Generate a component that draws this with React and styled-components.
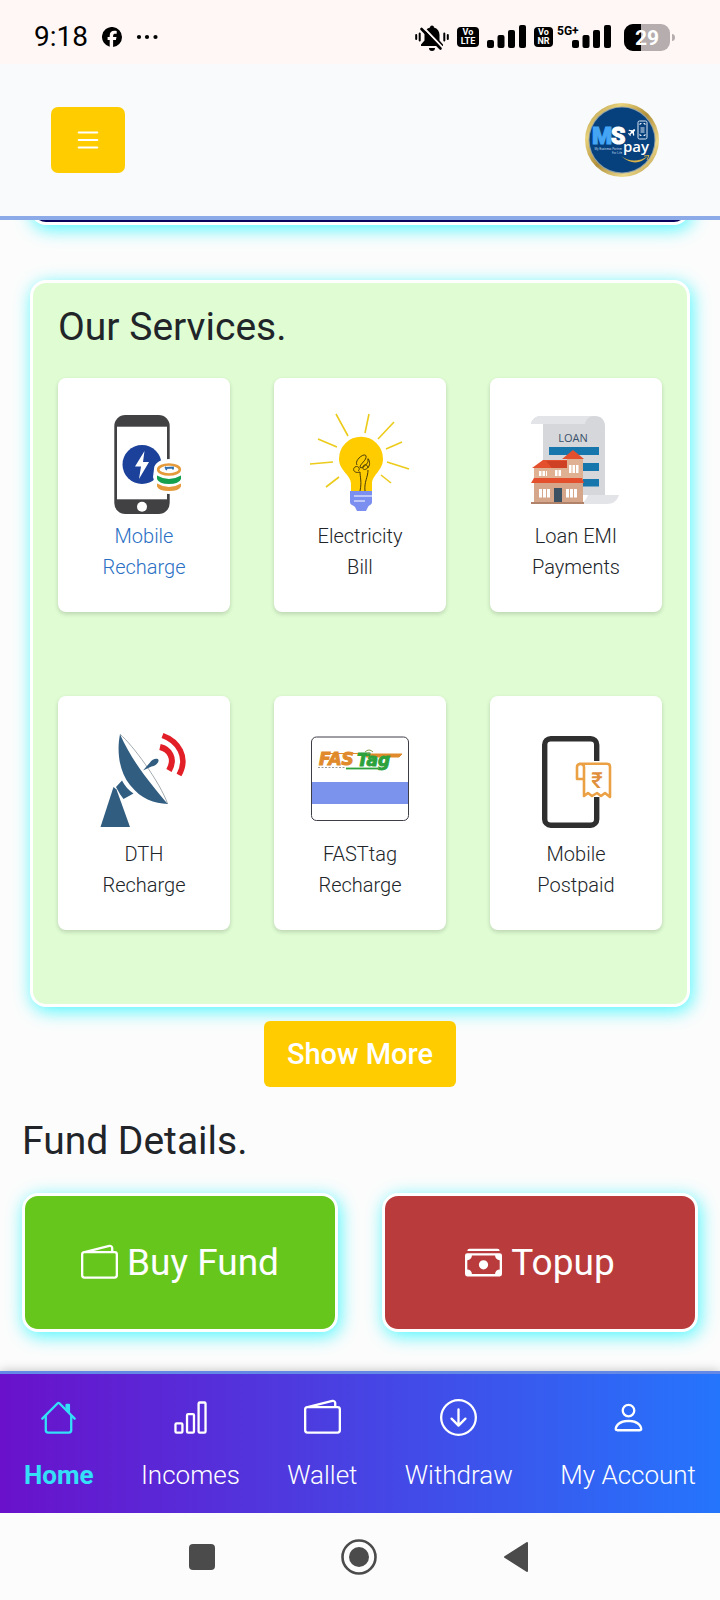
import React from "react";
import styled, { createGlobalStyle, css } from "styled-components";
import { BsList, BsBarChart, BsWallet2, BsArrowDownCircle, BsPerson, BsCashStack } from "react-icons/bs";

const GlobalStyle = createGlobalStyle`
  *, *::before, *::after { box-sizing: border-box; }
  body { margin: 0; background: #fcfcfc; color: #212529; font-family: Roboto, "Liberation Sans", sans-serif; }
  h2 { margin: 0; }
  a { color: inherit; text-decoration: none; }
  button { font-family: inherit; border: 0; cursor: pointer; padding: 0; }
  svg { display: block; flex: none; }
`;

const Page = styled.div`
  min-height: 100vh;
  display: flex;
  flex-direction: column;
`;

const glow = css`
  border: 3px solid #fff;
  border-radius: 16px;
  box-shadow: 2px 4px 18px rgba(0, 245, 255, 0.7);
`;

/* Phone status bar */

const StatusBar = styled.div`
  display: flex;
  align-items: center;
  justify-content: space-between;
  height: 64px;
  padding: 10px 45px 0 34px;
  background: #fff7f6;
  color: #000;
`;

const StatusGroup = styled.div`
  display: flex;
  align-items: center;
  gap: ${(p) => p.$gap}px;
`;

const Clock = styled.time`
  font-size: 28px;
  line-height: 32px;
`;

const NetworkBadge = styled.span`
  width: ${(p) => p.$width}px;
  height: 20px;
  padding-top: 1px;
  border-radius: 4px;
  background: #000;
  color: #fff;
  font-size: 9px;
  font-weight: 700;
  line-height: 9px;
  text-align: center;
`;

/* App header */

const Header = styled.header`
  display: flex;
  align-items: center;
  justify-content: space-between;
  padding: 39px 61px 39px 51px;
  background: #f8fafc;
  border-bottom: 4px solid #8caae8;
`;

const MenuButton = styled.button`
  display: grid;
  place-items: center;
  width: 74px;
  height: 66px;
  border-radius: 7px;
  background: #fc0;
  color: #fff;
`;

/* Content */

const Main = styled.main`
  flex: 1;
  display: flex;
  flex-direction: column;
  overflow: hidden;
  padding-bottom: 39px;
`;

const Banner = styled.div`
  ${glow}
  height: 60px;
  margin: -55px 30px 55px;
  background: #04045c;
`;

const Heading = styled.h2`
  font-size: 39px;
  font-weight: 400;
  line-height: 48px;
`;

const ServicesCard = styled.section`
  ${glow}
  display: flex;
  flex-direction: column;
  gap: 27px;
  margin: 0 30px;
  padding: 20px 25px 74px;
  background: #dffcd3;
`;

const ServiceGrid = styled.div`
  display: grid;
  grid-template-columns: repeat(3, 1fr);
  column-gap: 44px;
  row-gap: 84px;
`;

const ServiceTile = styled.a`
  display: flex;
  flex-direction: column;
  align-items: center;
  gap: 7px;
  padding: 36px 36px 29px;
  border-radius: 8px;
  background: #fff;
  box-shadow: 0 2px 4px rgba(0, 0, 0, 0.16);
  color: ${(p) => (p.$active ? "#2a6fc4" : "#212529")};
  font-size: 20px;
  font-weight: 300;
  line-height: 31px;
  text-align: center;
`;

const ShowMore = styled.button`
  align-self: center;
  margin: 14px 0 30px;
  padding: 0 23px;
  border-radius: 6px;
  background: #fc0;
  color: #fff;
  font-size: 29px;
  font-weight: 500;
  line-height: 66px;
`;

const FundSection = styled.section`
  display: flex;
  flex-direction: column;
  gap: 28px;
  padding: 0 22px;
`;

const FundGrid = styled.div`
  display: grid;
  grid-template-columns: 1fr 1fr;
  gap: 44px;
`;

const FundButton = styled.button`
  ${glow}
  display: flex;
  align-items: center;
  justify-content: center;
  gap: 9px;
  height: 139px;
  background: ${(p) => p.$color};
  color: #fff;
  font-size: 37px;
  line-height: 48px;
`;

/* Bottom tab bar */

const TabBar = styled.nav`
  display: flex;
  justify-content: space-between;
  padding: 25px 24px 23px;
  border-top: 3px solid #6488e6;
  background: linear-gradient(90deg, #6a11cb, #2575fc) padding-box;
  box-shadow: 0 0 10px rgba(0, 0, 0, 0.25);
`;

const Tab = styled.a`
  display: flex;
  flex-direction: column;
  align-items: center;
  gap: 24px;
  color: ${(p) => (p.$active ? "#33e0f8" : "#fff")};
  font-size: 26px;
  font-weight: ${(p) => (p.$active ? 700 : 300)};
  line-height: 30px;
`;

const SystemBar = styled.div`
  display: flex;
  align-items: center;
  justify-content: center;
  gap: 117px;
  height: 87px;
  padding-right: 2px;
  background: #fcfcfc;
`;

const SystemButton = styled.button`
  display: grid;
  place-items: center;
  width: 40px;
  height: 40px;
  background: none;
`;

/* Drawings */

const FacebookIcon = () => (
  <svg width="20" height="20" viewBox="0 0 20 20">
    <path
      fill="#000"
      d="M20 10A10 10 0 1 0 7.7 19.7v-6.6H5.6V10h2.1V8.7c0-3.4 1.5-5 4.9-5 .6 0 1.7.1 2.1.2v2.8h-1.3c-1.6 0-2.3.6-2.3 2.2V10h3.4l-.6 3.1h-2.8V20A10 10 0 0 0 20 10z"
    />
  </svg>
);

const DotsIcon = () => (
  <svg width="22" height="6" viewBox="0 0 22 6">
    <circle cx="3" cy="3" r="2.1" />
    <circle cx="11" cy="3" r="2.1" />
    <circle cx="19.500" cy="3" r="2.1" />
  </svg>
);

const SilentIcon = () => (
  <svg width="34" height="27" viewBox="0 0 34 27">
    <path d="M17 1.500a2 2 0 0 1 2 2c3.600 1 5.500 4 5.500 7.500v5.500l3.500 4v1.500H6v-1.500l3.500-4V11c0-3.500 1.900-6.500 5.500-7.500a2 2 0 0 1 2-2z" />
    <path d="M14 24h6a3 3 0 0 1-6 0z" />
    <g stroke="#000" strokeWidth="2" strokeLinecap="round">
      <path d="M1.200 11v4M4.700 9.500v7M29.300 9.500v7M32.800 11v4" />
    </g>
    <path d="M9 4l18 19" stroke="#fff7f6" strokeWidth="2" />
    <path d="M6.500 5l19 19.500" stroke="#000" strokeWidth="2.600" strokeLinecap="round" />
  </svg>
);

const SignalBars = ({ x = 0 }) => (
  <g>
    <rect x={x} y="15" width="7" height="8" rx="2" />
    <rect x={x + 10.5} y="10" width="7" height="13" rx="2" />
    <rect x={x + 21} y="5" width="7" height="18" rx="2" />
    <rect x={x + 32} y="0" width="7" height="23" rx="2" />
  </g>
);

const SignalIcon = () => (
  <svg width="39" height="24" viewBox="0 0 39 24">
    <SignalBars />
  </svg>
);

const Signal5GIcon = () => (
  <svg width="55" height="28" viewBox="0 -2 55 28">
    <SignalBars x={16} />
    <text x="1" y="10" fontSize="12" fontWeight="700">5G+</text>
  </svg>
);

const BatteryIcon = () => (
  <svg width="51" height="27" viewBox="0 0 51 27">
    <rect width="46" height="27" rx="9" fill="#b6aeae" />
    <path d="M9 0h8v27H9a9 9 0 0 1-9-9V9a9 9 0 0 1 9-9z" />
    <path d="M48 10c2 0 3 1.500 3 3.500s-1 3.500-3 3.500z" fill="#b6aeae" />
    <text x="23" y="21" fontSize="21" fontWeight="700" fill="#fff" textAnchor="middle">29</text>
  </svg>
);

const Logo = () => (
  <svg width="74" height="74" viewBox="0 0 74 74" role="img" aria-label="MS pay">
    <defs>
      <linearGradient id="gold" x1="0" y1="0" x2="1" y2="1">
        <stop offset="0" stopColor="#a58a3a" />
        <stop offset="0.25" stopColor="#e9d27c" />
        <stop offset="0.5" stopColor="#b08f3a" />
        <stop offset="0.75" stopColor="#ecd98c" />
        <stop offset="1" stopColor="#a8842c" />
      </linearGradient>
    </defs>
    <circle cx="37" cy="37" r="37" fill="url(#gold)" />
    <circle cx="37" cy="37" r="33.500" fill="#8fa0a8" />
    <circle cx="37" cy="37" r="32.500" fill="#06417d" />
    <text x="7" y="41" fontSize="23" fontWeight="900" fill="#45a5f5" stroke="#45a5f5">M</text>
    <text x="26" y="41" fontSize="23" fontWeight="900" fill="#fff" stroke="#fff">S</text>
    <text x="38" y="49" fontSize="15" fontFamily="Open Sans" fontWeight="600" fill="#fff">pay</text>
    <text x="37" y="47" fontSize="3" fill="#b9cfe4" textAnchor="end">My Business Partner</text>
    <text x="37" y="51" fontSize="3" fill="#b9cfe4" textAnchor="end">For Life</text>
    <path d="M36 53q13 9 27 0q-12 13-27 0z" fill="#d5b04a" />
    <path d="M59 53l5-.500-2 4.500" fill="none" stroke="#d5b04a" />
    <g fill="none" stroke="#dfeaf5">
      <rect x="53" y="18" width="9" height="18" rx="1.500" />
      <path d="M55 22v-1.500h1.500M58.500 20.500H60V22M55 31v1.500h1.500M58.500 32.500H60V31" />
      <path d="M55.500 25h4M55.500 27h4M55.500 29h4" />
    </g>
    <path
      d="M50 26.500c-1-.6-1.800 0-2.500.8l-3.500-.6-.6.7 2.800 1.400-1.400 1.600-1.500-.2-.5.5 1.500 1 .8 1.500.6-.5v-1.500l1.600-1.300 1.200 3 .8-.6-.4-3.500c.8-.7 1.500-1.500 1.100-2.300z"
      fill="#fff"
    />
  </svg>
);

const HomeIcon = () => (
  <svg width="37" height="37" viewBox="0 0 16 16" fill="currentColor">
    <path d="M2 13.5V7h1v6.5a.5.5 0 0 0 .5.5h9a.5.5 0 0 0 .5-.5V7h1v6.500a1.500 1.500 0 0 1-1.500 1.500h-9A1.500 1.500 0 0 1 2 13.500zm11-11V6l-2-2V2.500a.5.5 0 0 1 .5-.5h1a.5.5 0 0 1 .5.5z" />
    <path d="M7.293 1.500a1 1 0 0 1 1.414 0l6.647 6.646a.5.5 0 0 1-.708.708L8 2.207 1.354 8.854a.5.5 0 1 1-.708-.708L7.293 1.500z" />
  </svg>
);

const ServiceArt = ({ children }) => (
  <svg width="100" height="100" viewBox="0 0 100 100" overflow="visible" aria-hidden="true">
    {children}
  </svg>
);

const MobileArt = () => (
  <ServiceArt>
    <rect x="20.300" y="1" width="55.400" height="99" rx="11" fill="#414042" />
    <rect x="23" y="12.700" width="50" height="72.600" fill="#fff" />
    <circle cx="48" cy="92.700" r="5" fill="#fff" />
    <circle cx="48" cy="50.500" r="19.500" fill="#1b419b" />
    <path d="M50.500 37l-9.500 15.500h6L45 65l10-17h-6z" fill="#fff" />
    <path d="M60 55c0-6 7-10 15-10s15 4 15 10v15c0 6-7 10-15 10s-14-4-14-10l-2-7z" fill="#fff" />
    <ellipse cx="75" cy="55.500" rx="10.800" ry="5" fill="#fff" stroke="#e59a3c" strokeWidth="2.600" />
    <path d="M63 61.500q12 7 24 0v3.500q-2 5-12 5t-12-5z" fill="#15a04d" />
    <path d="M63 69.500q12 7 24 0v3q-2 4.500-12 4.500t-12-4.500z" fill="#e59a3c" />
    <path d="M71 53q2 1.500 1 3M71.500 54l7.500-.500v2" fill="none" stroke="#2f6cab" strokeWidth="1.800" />
  </ServiceArt>
);

const BulbArt = () => (
  <ServiceArt>
    <path
      d="M26 0l12 22M8 25l19 8M0 50l23-2M16 73l13-10M59 0l-4 19M84 8L68 25M92 28l-16 7M99 55l-22-7M81 69L71 61"
      fill="none"
      stroke="#eccb1b"
      strokeWidth="1.600"
    />
    <path d="M51 22.700a22 22 0 0 1 22 22c0 12-11 16-11 25v8H41v-8c0-9-12-13-12-25a22 22 0 0 1 22-22z" fill="#fc0" />
    <g fill="none" stroke="#4b3a06" strokeWidth="1">
      <path d="M50 77c2-9 0-14 0-19M55 77c-1-9 3-14 3-21" />
      <path d="M50 58c-6 2-8-3-5-5s6 2 3 4M47 51c-3-5 8-13 9-9s-6 8-6 11 9-3 8-7 3 2 1 6-7 5-6 1 5-2 5 1" />
    </g>
    <path d="M40 77h22v11c0 3-3 3-4 5l-2 4H47l-2-4c-2-2-5-2-5-5z" fill="#7b8ff0" />
    <path d="M44 82h18M44 87h11" stroke="#fff" strokeWidth="1.200" />
  </ServiceArt>
);

const LoanArt = () => (
  <ServiceArt>
    <path d="M5 10c1-5 5-8 10-8h54c6 0 10 4 10 10v69H17V10z" fill="#d5d7db" />
    <path d="M5 10c1-5 5-8 10-8h54c-6 0-9 3-10 8z" fill="#e3e4e8" />
    <path d="M50 90c6 0 10-3 12-9h31c-2 6-6 9-12 9z" fill="#e3e4e8" />
    <text x="47" y="28" fontSize="11" fontFamily="Open Sans" fontWeight="500" fill="#39516a" textAnchor="middle">LOAN</text>
    <path d="M23 33h50v8H23zM50 49h23v8H50zM50 65h23v7.500H50z" fill="#1776ac" />
    <path d="M8 53h33V44h16v25H8z" fill="#dfb092" />
    <path d="M8 69h49v21H8z" fill="#d6a68a" />
    <path d="M36 45l11-9 11 9zM6 54l11-8h24v8zM8 64h48l2 5H5z" fill="#e4502e" />
    <path d="M20 47h21v7H26z" fill="#cf4124" />
    <path d="M5 88h53v2H5z" fill="#b08269" />
    <path
      d="M13 57h2.500v5H13zM16.500 57H19v5h-2.500zM20 57h1v5h-1zM29 56h2.500v6H29zM32.500 56H35v6h-2.500zM43 51h2.500v8H43zM46.500 51H49v8h-2.500zM50 51h2.500v8H50zM13 75h3v8.500h-3zM17 75h3v8.500h-3zM21 75h3v8.500h-3zM40 75h3v8.500h-3zM44 75h3v8.500h-3zM48 75h3v8.500h-3z"
      fill="#fff"
    />
    <path d="M28 74h8v14h-8z" fill="#3c5161" />
  </ServiceArt>
);

const DishArt = () => (
  <ServiceArt>
    <path d="M26 2.300C38 12 66 50 73.700 72" fill="none" stroke="#8d959b" strokeWidth="0.800" />
    <path d="M26 2.300C23 17 24 38 36 53s24 18 37.700 19C62 58 39 32 26 2.300z" fill="#315d80" />
    <path d="M49 38.500l7-8c2-4 8-5 8.500-2.500s-3 6-7 6.500z" fill="#315d80" />
    <path d="M28 48.500q4 8 11.500 13l-10 5.500q-4-5-7.500-12z" fill="#315d80" />
    <path d="M19.500 55l3 2.500 13.500 37.500H6.500z" fill="#315d80" />
    <g fill="none" stroke="#e21e26">
      <path d="M66 15C75 17 82 26 75 38.500" strokeWidth="6" />
      <path d="M68.500 3.500C84 9 95 25 85 43" strokeWidth="5.500" />
    </g>
  </ServiceArt>
);

const FastagArt = () => (
  <ServiceArt>
    <rect x="1.500" y="5" width="97" height="83.500" rx="5" fill="#fff" stroke="#3d3d48" />
    <path d="M2 50h96v22H2z" fill="#7b93ec" />
    <path d="M14 21.500h36M56 22h36l-3 3H56z" fill="#e08a2c" stroke="#e08a2c" strokeWidth="1" />
    <g fontFamily="DejaVu Sans" fontSize="17" fontWeight="700" fontStyle="italic">
      <text x="9" y="33" fill="#e08a2c" stroke="#e08a2c">FAS</text>
      <text x="47" y="34" fill="#2da23c" stroke="#2da23c">Tag</text>
    </g>
    <path d="M36 36.500h32" stroke="#2da23c" strokeWidth="1.800" />
    <path d="M8 35.500h27" stroke="#9a9a9a" strokeWidth="1" strokeDasharray="2 1.500" />
    <path d="M55 20q4-4 8 0M57 22q2-2 4 0" fill="none" stroke="#8a9c4a" />
  </ServiceArt>
);

const PostpaidArt = () => (
  <ServiceArt>
    <rect x="18.700" y="6.700" width="52" height="86.500" rx="6" fill="none" stroke="#2f2f2f" strokeWidth="5.400" />
    <path d="M50 29h35v36H55V48h-6z" fill="#fff" />
    <path
      d="M53 31.700h28c2 0 3 1 3 3V65l-5-4-4 3-4-3-5 3-4-3-4 3V35c0-4-7-4-7 0v12h7"
      fill="none"
      stroke="#eba044"
      strokeWidth="2.600"
      strokeLinejoin="round"
    />
    <text x="71" y="56" fontSize="22" fontWeight="500" fill="#e08f3c" textAnchor="middle">₹</text>
  </ServiceArt>
);

const services = [
  { lines: ["Mobile", "Recharge"], Art: MobileArt, active: true },
  { lines: ["Electricity", "Bill"], Art: BulbArt },
  { lines: ["Loan EMI", "Payments"], Art: LoanArt },
  { lines: ["DTH", "Recharge"], Art: DishArt },
  { lines: ["FASTtag", "Recharge"], Art: FastagArt },
  { lines: ["Mobile", "Postpaid"], Art: PostpaidArt },
];

const tabs = [
  { label: "Home", Icon: HomeIcon, active: true },
  { label: "Incomes", Icon: BsBarChart },
  { label: "Wallet", Icon: BsWallet2 },
  { label: "Withdraw", Icon: BsArrowDownCircle },
  { label: "My Account", Icon: BsPerson },
];

export default function App() {
  return (
    <Page>
      <GlobalStyle />
      <StatusBar>
        <StatusGroup $gap={14}>
          <Clock>9:18</Clock>
          <FacebookIcon />
          <DotsIcon />
        </StatusGroup>
        <StatusGroup $gap={13}>
          <StatusGroup $gap={8}>
            <SilentIcon />
            <NetworkBadge $width={22}>Vo<br />LTE</NetworkBadge>
            <SignalIcon />
            <StatusGroup $gap={3}>
              <NetworkBadge $width={19}>Vo<br />NR</NetworkBadge>
              <Signal5GIcon />
            </StatusGroup>
          </StatusGroup>
          <BatteryIcon />
        </StatusGroup>
      </StatusBar>

      <Header>
        <MenuButton aria-label="Menu">
          <BsList size={30} />
        </MenuButton>
        <Logo />
      </Header>

      <Main>
        <Banner />
        <ServicesCard>
          <Heading>Our Services.</Heading>
          <ServiceGrid>
            {services.map(({ lines, Art, active }) => (
              <ServiceTile href="#" key={lines.join(" ")} $active={active}>
                <Art />
                <span>
                  {lines[0]}
                  <br />
                  {lines[1]}
                </span>
              </ServiceTile>
            ))}
          </ServiceGrid>
        </ServicesCard>
        <ShowMore>Show More</ShowMore>

        <FundSection>
          <Heading>Fund Details.</Heading>
          <FundGrid>
            <FundButton $color="#66c61c">
              <BsWallet2 size={37} />
              Buy Fund
            </FundButton>
            <FundButton $color="#ba3b3b">
              <BsCashStack size={37} />
              Topup
            </FundButton>
          </FundGrid>
        </FundSection>
      </Main>

      <TabBar>
        {tabs.map(({ label, Icon, active }) => (
          <Tab href="#" key={label} $active={active}>
            <Icon size={37} />
            {label}
          </Tab>
        ))}
      </TabBar>

      <SystemBar>
        <SystemButton aria-label="Recent apps">
          <svg width="26" height="26" viewBox="0 0 26 26">
            <rect width="26" height="26" rx="4" fill="#4b4b4b" />
          </svg>
        </SystemButton>
        <SystemButton aria-label="Home screen">
          <svg width="36" height="36" viewBox="0 0 36 36">
            <circle cx="18" cy="18" r="16.500" fill="none" stroke="#4b4b4b" strokeWidth="2.600" />
            <circle cx="18" cy="18" r="10" fill="#4b4b4b" />
          </svg>
        </SystemButton>
        <SystemButton aria-label="Back">
          <svg width="26" height="30" viewBox="0 0 26 30">
            <path d="M24 1v28L2 15z" fill="#4b4b4b" stroke="#4b4b4b" strokeWidth="2" strokeLinejoin="round" />
          </svg>
        </SystemButton>
      </SystemBar>
    </Page>
  );
}
